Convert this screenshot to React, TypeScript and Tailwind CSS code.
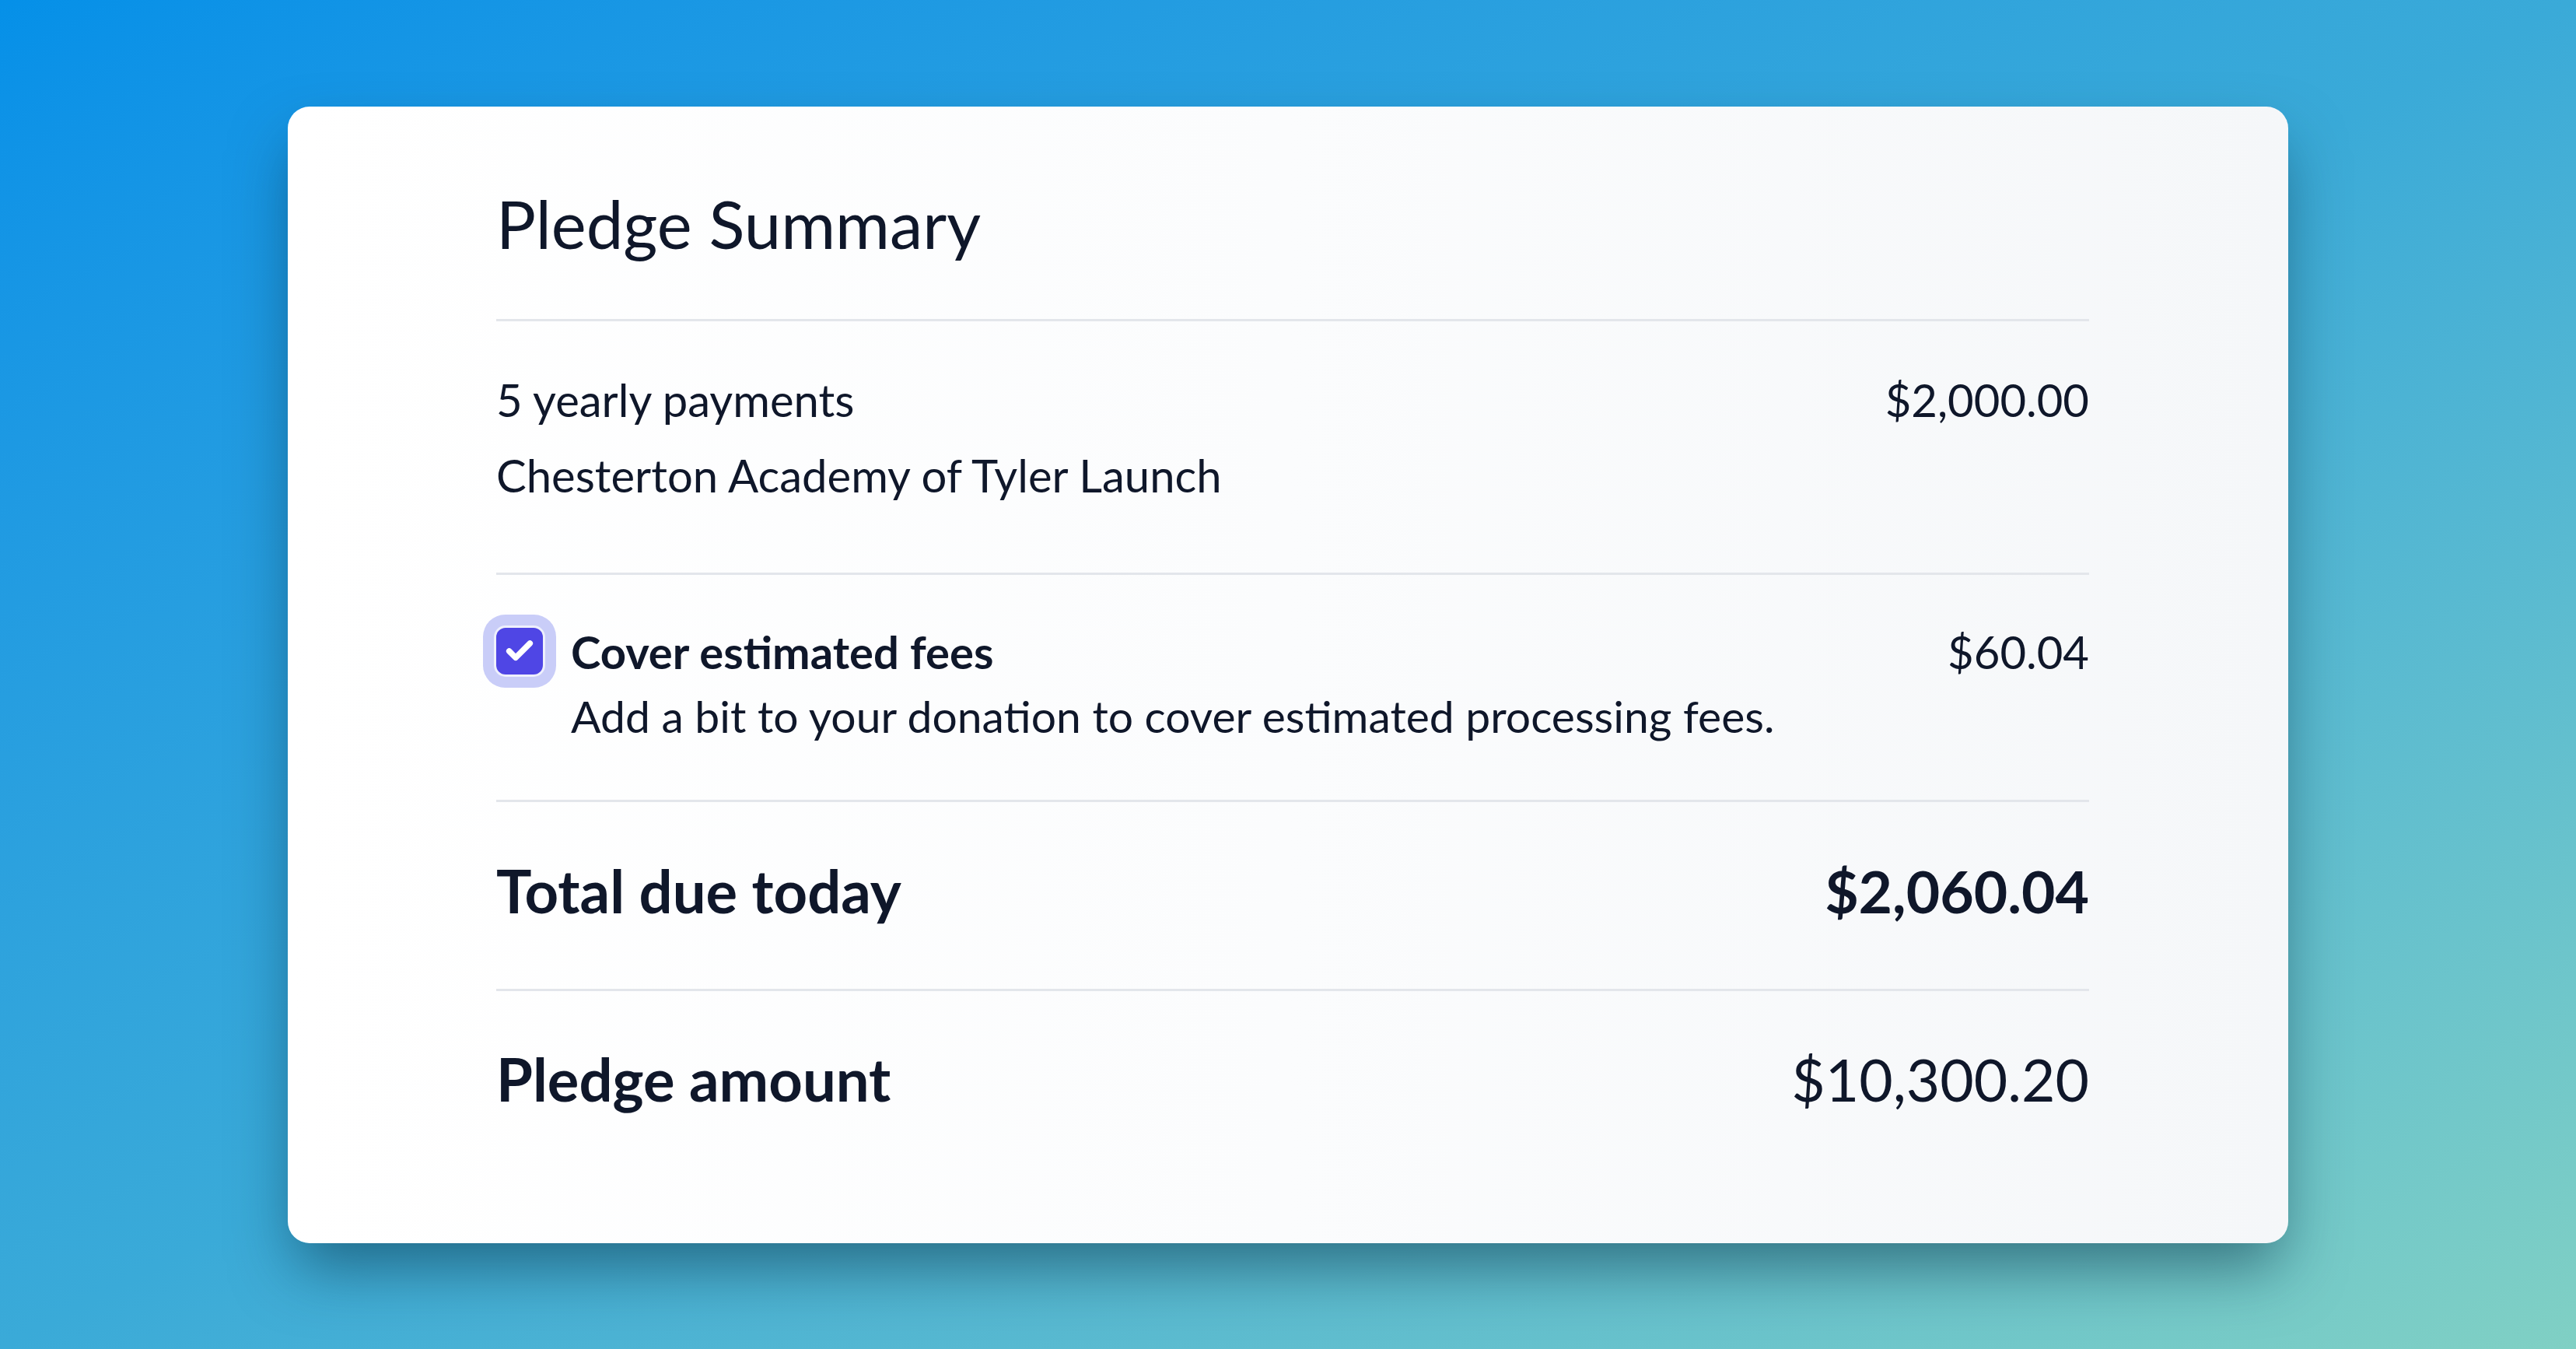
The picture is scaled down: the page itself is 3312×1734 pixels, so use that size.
import { Check } from "lucide-react";

function Divider() {
  return <div className="h-[3px] w-full bg-[#e3e6eb]" />;
}

export default function App() {
  return (
    <div
      className="min-h-screen w-full flex items-center justify-center bg-gradient-to-br from-[#0590e8] via-[#3aaad8] to-[#80d0c4] text-[#0f172a]"
      style={{ fontFamily: "Lato, 'Noto Sans', sans-serif" }}
    >
      {/* Card */}
      <div className="w-[2572px] rounded-[28px] bg-gradient-to-r from-white via-[#fbfcfd] to-[#f5f7f9] shadow-[0_40px_80px_-10px_rgba(8,50,70,0.55)] pl-[268px] pr-[256px] pt-[110px] pb-[175px]">
        <h1 className="text-[85px] leading-[80px] font-normal">Pledge Summary</h1>

        <div className="mt-[83px]">
          <Divider />
        </div>

        {/* Payment rows */}
        <div className="pt-[52px] pb-[77px] text-[58px] leading-[97px]">
          <div className="flex items-center justify-between">
            <span>5 yearly payments</span>
            <span>$2,000.00</span>
          </div>
          <div>Chesterton Academy of Tyler Launch</div>
        </div>

        <Divider />

        {/* Fees */}
        <div className="pt-[58px] pb-[67px] flex items-start gap-[36px] leading-[82px]">
          <div className="mt-[10px] w-[60px] h-[60px] shrink-0 rounded-[12px] bg-[#4f46e5] flex items-center justify-center ring-[14px] ring-[#c9cdf8] ring-offset-[3px] ring-offset-[#eef0fc]">
            <Check className="w-[40px] h-[40px] text-white" strokeWidth={4.5} />
          </div>
          <div className="flex-1">
            <div className="flex items-center justify-between text-[58px]">
              <span className="font-bold">Cover estimated fees</span>
              <span>$60.04</span>
            </div>
            <div className="text-[57px]">Add a bit to your donation to cover estimated processing fees.</div>
          </div>
        </div>

        <Divider />

        {/* Total due */}
        <div className="pt-[78px] pb-[90px] flex items-center justify-between text-[76px] leading-[72px] font-bold">
          <span>Total due today</span>
          <span className="text-[75px]">$2,060.04</span>
        </div>

        <Divider />

        {/* Pledge amount */}
        <div className="pt-[77px] flex items-center justify-between text-[76px] leading-[72px]">
          <span className="font-bold">Pledge amount</span>
          <span className="text-[75px]">$10,300.20</span>
        </div>
      </div>
    </div>
  );
}
